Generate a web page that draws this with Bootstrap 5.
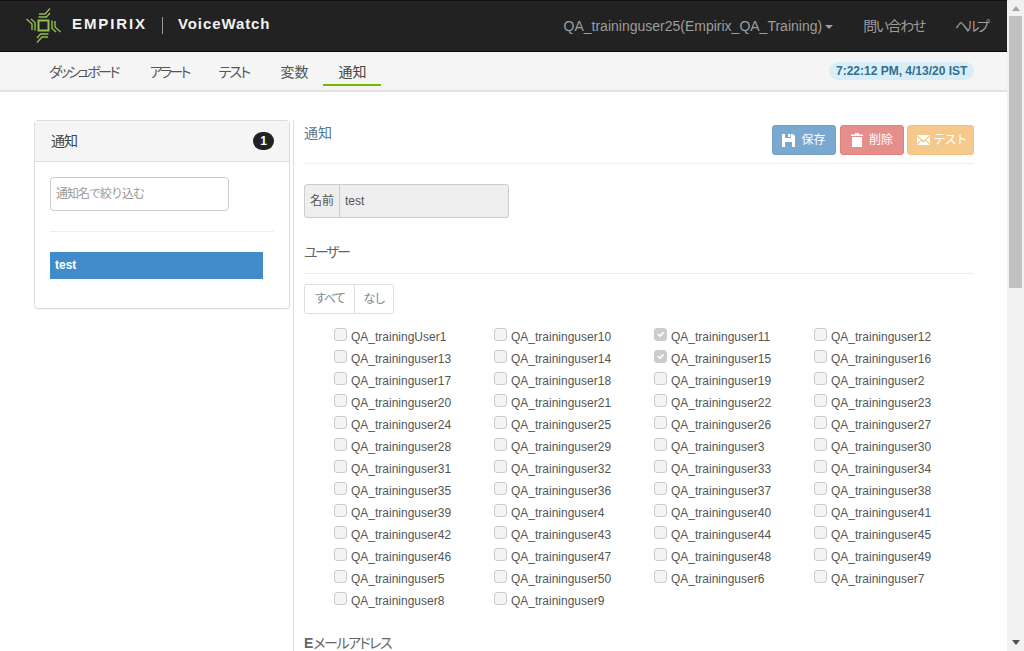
<!DOCTYPE html>
<html lang="ja">
<head>
<meta charset="utf-8">
<title>VoiceWatch</title>
<link rel="stylesheet" href="https://cdn.jsdelivr.net/npm/bootstrap@5.3.0/dist/css/bootstrap.min.css">
<style>
html,body{height:100%;overflow:hidden}
body{font-family:"Liberation Sans","Noto Sans CJK JP",sans-serif;font-size:12px;color:#555;font-feature-settings:"palt"}
.shell{height:651px}
.page{width:1007px;flex:none;overflow:hidden}
.sbar{width:17px;background:#f1f1f1;flex:none;padding:0 2px}
.sbar-thumb{height:272px;background:#c1c1c1}
.sbar-up,.sbar-down{height:16px}
.sbar-up svg,.sbar-down svg{display:block;margin:0 auto}
.topbar{height:52px;background:#222;border-top:1px solid #111;border-bottom:1px solid #080808;padding:0 5px 0 26px}
.logo-text{font-weight:700;color:#f2f2f2;font-size:15px;padding-bottom:3px}
.logo-a{letter-spacing:1.9px;margin-left:10px}
.logo-b{letter-spacing:.9px}
.logo-sep{width:1px;height:17px;background:#999;margin:0 15px 2px 15px}
.top-link{color:#9d9d9d;font-size:14px;text-decoration:none;padding:0 15px}
.top-caret{display:inline-block;border-top:4px solid #9d9d9d;border-left:4px solid transparent;border-right:4px solid transparent;margin-left:3px;vertical-align:middle}
.ls-a{letter-spacing:-1.4px}
.ls-h{letter-spacing:-2.7px}
.ls-b{letter-spacing:-2.5px}
.ls-c{letter-spacing:-2.6px}
.ls-d{letter-spacing:-2.75px}
.ls-t{letter-spacing:-1.7px}
.ls-f{letter-spacing:-1.5px}
.ls-g{letter-spacing:-1px}
.subbar{height:40px;background:#f5f5f5;border-bottom:2px solid #e3e3e3;padding:0 33px 0 34px}
.sub-link{color:#555;font-size:14px;text-decoration:none;padding:0 15px;height:34px;line-height:40px;display:block;margin-top:0;position:relative}
.sub-link.on{border-bottom:2px solid #7ab800;color:#444;padding:0 14px 0 16px}
.sub-first{padding-right:17px}
.sub-third{padding-right:16px}
.sub-fourth{padding-right:14px}
.clock{background:#d9edf7;color:#31708f;font-weight:700;font-size:12px;border-radius:9px;height:18px;line-height:18px;padding:0 7px;width:145px;text-align:center;white-space:nowrap;margin-top:-1px}
.body-row{padding:28px 33px 0 34px}
.side{width:256px;flex:none}
.side-card{--bs-card-border-color:#ddd;--bs-card-border-radius:4px;height:189px;box-shadow:0 1px 1px rgba(0,0,0,.05)}
.side-head{height:41px;background:#f5f5f5;border-bottom:1px solid #ddd;padding:0 15px 0 16px;font-size:14px;color:#444}
.cnt{background:#222;color:#fff;font-weight:700;font-size:12px;width:21px;height:18px;border-radius:9px;line-height:18px;text-align:center}
.side-body{padding:15px}
.filter{width:179px;height:34px;font-size:12px;padding:6px 5px;border-color:#ccc;border-radius:4px;letter-spacing:-1px}
.filter::placeholder{color:#999}
.rule{border:0;border-top:1px solid #eee;opacity:1;margin:20px 0 0}
.side-item{width:213px;height:27px;line-height:27px;background:#428bca;color:#fff;font-weight:700;padding-left:5px;margin-top:20px}
.main-col{margin-left:3px;border-left:1px solid #ddd;padding-left:10px;flex:1;height:560px;margin-top:0}
.h-notice{font-size:14px;color:#5a7690;height:43px;padding-top:4px;line-height:18px}
.h-sec{font-size:14px;color:#666;line-height:18px}
.head-row{height:44px;border-bottom:1px solid #eee}
.btn-row{padding-top:5px}
.act{--bs-btn-padding-x:0;--bs-btn-padding-y:0;height:30px;font-size:12px;border-radius:3px;color:#fff;display:inline-flex;align-items:center;justify-content:center;gap:6px;--bs-btn-disabled-color:#fff;--bs-btn-disabled-opacity:.65}
.act-save{width:64px;--bs-btn-disabled-bg:#337ab7;--bs-btn-disabled-border-color:#2e6da4}
.act-del{width:64px;--bs-btn-disabled-bg:#d9534f;--bs-btn-disabled-border-color:#d43f3a}
.act-test{width:67px;gap:3px;margin-left:-1px;letter-spacing:-1px;padding-left:3px;--bs-btn-disabled-bg:#f0ad4e;--bs-btn-disabled-border-color:#eea236}
.name-group{width:205px;height:34px;margin-top:20px}
.name-group .input-group-text{background:#eee;border-color:#ccc;font-size:12px;color:#555;padding:0 5px;width:36px;justify-content:center;border-radius:3px 0 0 3px}
.name-group .form-control{background:#eee;border-color:#ccc;font-size:12px;color:#555;padding:0 5px;border-radius:0 3px 3px 0}
.sec-users{margin-top:25px;height:31px;border-bottom:1px solid #eee}
.pick{margin-top:10px}
.pick .btn{--bs-btn-padding-x:0;--bs-btn-padding-y:0;height:30px;font-size:12px;color:#888;border-color:#ddd;border-radius:3px;--bs-btn-bg:#fff;letter-spacing:-1.5px}
.pick .w-all{width:51px}
.pick .w-none{width:40px}
.users{margin:12px 0 0 30px;width:640px}
.u-cell{height:22px;display:flex;align-items:flex-start;gap:4px;color:#555;white-space:nowrap;line-height:22px}
.u-cell .form-check-input{width:13px;height:13px;margin:2px 0 0;border-color:#ccc;background-color:#f3f3f3;border-radius:3px;opacity:1;flex:none}
.u-cell .form-check-input:checked{background-color:#ccc;border-color:#ccc}
.u-cell .form-check-input:disabled~.form-check-label{opacity:1;color:#555}
.h-mail{font-size:14px;color:#666;margin-top:22px;line-height:18px}
.h-mail b{font-weight:700}
</style>
</head>
<body>
<div class="shell d-flex">
<div class="page">
  <header class="topbar d-flex align-items-center">
    <svg width="36" height="36" viewBox="0 0 36 36" aria-hidden="true">
      <g fill="none" stroke="#8fbe4f" stroke-width="1.4">
        <rect x="12.500" y="12.500" width="10" height="10" stroke-width="2"/>
        <g><path d="M12.500 9H20.500L24 5"/><path d="M13 6H19L24 .5"/></g>
        <g transform="rotate(90 17.5 17.5)"><path d="M12.500 9H20.500L24 5"/><path d="M13 6H19L24 .5"/></g>
        <g transform="rotate(180 17.5 17.5)"><path d="M12.500 9H20.500L24 5"/><path d="M13 6H19L24 .5"/></g>
        <g transform="rotate(270 17.5 17.5)"><path d="M12.500 9H20.500L24 5"/><path d="M13 6H19L24 .5"/></g>
      </g>
    </svg>
    <span class="logo-text logo-a">EMPIRIX</span><span class="logo-sep"></span><span class="logo-text logo-b">VoiceWatch</span>
    <nav class="ms-auto d-flex align-items-center">
      <a class="top-link" href="#">QA_traininguser25(Empirix_QA_Training)<span class="top-caret"></span></a>
      <a class="top-link" href="#"><span class="ls-a">問い合わせ</span></a>
      <a class="top-link" href="#"><span class="ls-h">ヘルプ</span></a>
    </nav>
  </header>
  <div class="subbar d-flex justify-content-between">
    <nav class="d-flex">
      <a class="sub-link sub-first" href="#"><span class="ls-c">ダッシュボード</span></a>
      <a class="sub-link" href="#"><span class="ls-d">アラート</span></a>
      <a class="sub-link sub-third" href="#"><span class="ls-t">テスト</span></a>
      <a class="sub-link sub-fourth" href="#">変数</a>
      <a class="sub-link on" href="#">通知</a>
    </nav>
    <div class="d-flex align-items-center"><span class="clock">7:22:12 PM, 4/13/20 IST</span></div>
  </div>
  <div class="body-row d-flex">
    <aside class="side">
      <div class="card side-card">
        <div class="side-head d-flex justify-content-between align-items-center"><span class="ls-g">通知</span><span class="cnt">1</span></div>
        <div class="side-body">
          <input class="form-control filter" type="text" placeholder="通知名で絞り込む">
          <hr class="rule">
          <div class="side-item">test</div>
        </div>
      </div>
    </aside>
    <main class="main-col">
      <div class="head-row d-flex justify-content-between align-items-start">
        <div class="h-notice">通知</div>
        <div class="d-flex gap-1 btn-row">
          <button class="btn act act-save" disabled><svg width="13" height="13" viewBox="0 0 13 13" aria-hidden="true"><path fill="#fff" fill-rule="evenodd" d="M0 0H3V4H9V0H11L13 2V13H0ZM6 0H8.500V3H6ZM3 8V13H10V8Z"/></svg>保存</button>
          <button class="btn act act-del" disabled><svg width="12" height="14" viewBox="0 0 12 14" aria-hidden="true"><path fill="#fff" d="M4 0H8V1.500H12V3H0V1.500H4ZM1 4H11V14H1Z"/></svg>削除</button>
          <button class="btn act act-test" disabled><svg width="13" height="10" viewBox="0 0 13 10" aria-hidden="true"><path fill="#fff" d="M0 0H13L6.500 5.500ZM0 1.500L4 5L0 8.500ZM13 1.500V8.500L9 5ZM0 10L4.700 6L6.500 7.500L8.300 6L13 10Z"/></svg>テスト</button>
        </div>
      </div>
      <div class="input-group name-group">
        <span class="input-group-text">名前</span>
        <input class="form-control" type="text" value="test" readonly>
      </div>
      <div class="h-sec sec-users"><span class="ls-b">ユーザー</span></div>
      <div class="btn-group pick" role="group">
        <button type="button" class="btn btn-outline-secondary w-all">すべて</button>
        <button type="button" class="btn btn-outline-secondary w-none">なし</button>
      </div>
      <div class="row row-cols-4 g-0 users">
        <div class="col u-cell"><input class="form-check-input" type="checkbox" disabled id="u1"><label class="form-check-label" for="u1">QA_trainingUser1</label></div>
        <div class="col u-cell"><input class="form-check-input" type="checkbox" disabled id="u10"><label class="form-check-label" for="u10">QA_traininguser10</label></div>
        <div class="col u-cell"><input class="form-check-input" type="checkbox" disabled checked id="u11"><label class="form-check-label" for="u11">QA_traininguser11</label></div>
        <div class="col u-cell"><input class="form-check-input" type="checkbox" disabled id="u12"><label class="form-check-label" for="u12">QA_traininguser12</label></div>
        <div class="col u-cell"><input class="form-check-input" type="checkbox" disabled id="u13"><label class="form-check-label" for="u13">QA_traininguser13</label></div>
        <div class="col u-cell"><input class="form-check-input" type="checkbox" disabled id="u14"><label class="form-check-label" for="u14">QA_traininguser14</label></div>
        <div class="col u-cell"><input class="form-check-input" type="checkbox" disabled checked id="u15"><label class="form-check-label" for="u15">QA_traininguser15</label></div>
        <div class="col u-cell"><input class="form-check-input" type="checkbox" disabled id="u16"><label class="form-check-label" for="u16">QA_traininguser16</label></div>
        <div class="col u-cell"><input class="form-check-input" type="checkbox" disabled id="u17"><label class="form-check-label" for="u17">QA_traininguser17</label></div>
        <div class="col u-cell"><input class="form-check-input" type="checkbox" disabled id="u18"><label class="form-check-label" for="u18">QA_traininguser18</label></div>
        <div class="col u-cell"><input class="form-check-input" type="checkbox" disabled id="u19"><label class="form-check-label" for="u19">QA_traininguser19</label></div>
        <div class="col u-cell"><input class="form-check-input" type="checkbox" disabled id="u2"><label class="form-check-label" for="u2">QA_traininguser2</label></div>
        <div class="col u-cell"><input class="form-check-input" type="checkbox" disabled id="u20"><label class="form-check-label" for="u20">QA_traininguser20</label></div>
        <div class="col u-cell"><input class="form-check-input" type="checkbox" disabled id="u21"><label class="form-check-label" for="u21">QA_traininguser21</label></div>
        <div class="col u-cell"><input class="form-check-input" type="checkbox" disabled id="u22"><label class="form-check-label" for="u22">QA_traininguser22</label></div>
        <div class="col u-cell"><input class="form-check-input" type="checkbox" disabled id="u23"><label class="form-check-label" for="u23">QA_traininguser23</label></div>
        <div class="col u-cell"><input class="form-check-input" type="checkbox" disabled id="u24"><label class="form-check-label" for="u24">QA_traininguser24</label></div>
        <div class="col u-cell"><input class="form-check-input" type="checkbox" disabled id="u25"><label class="form-check-label" for="u25">QA_traininguser25</label></div>
        <div class="col u-cell"><input class="form-check-input" type="checkbox" disabled id="u26"><label class="form-check-label" for="u26">QA_traininguser26</label></div>
        <div class="col u-cell"><input class="form-check-input" type="checkbox" disabled id="u27"><label class="form-check-label" for="u27">QA_traininguser27</label></div>
        <div class="col u-cell"><input class="form-check-input" type="checkbox" disabled id="u28"><label class="form-check-label" for="u28">QA_traininguser28</label></div>
        <div class="col u-cell"><input class="form-check-input" type="checkbox" disabled id="u29"><label class="form-check-label" for="u29">QA_traininguser29</label></div>
        <div class="col u-cell"><input class="form-check-input" type="checkbox" disabled id="u3"><label class="form-check-label" for="u3">QA_traininguser3</label></div>
        <div class="col u-cell"><input class="form-check-input" type="checkbox" disabled id="u30"><label class="form-check-label" for="u30">QA_traininguser30</label></div>
        <div class="col u-cell"><input class="form-check-input" type="checkbox" disabled id="u31"><label class="form-check-label" for="u31">QA_traininguser31</label></div>
        <div class="col u-cell"><input class="form-check-input" type="checkbox" disabled id="u32"><label class="form-check-label" for="u32">QA_traininguser32</label></div>
        <div class="col u-cell"><input class="form-check-input" type="checkbox" disabled id="u33"><label class="form-check-label" for="u33">QA_traininguser33</label></div>
        <div class="col u-cell"><input class="form-check-input" type="checkbox" disabled id="u34"><label class="form-check-label" for="u34">QA_traininguser34</label></div>
        <div class="col u-cell"><input class="form-check-input" type="checkbox" disabled id="u35"><label class="form-check-label" for="u35">QA_traininguser35</label></div>
        <div class="col u-cell"><input class="form-check-input" type="checkbox" disabled id="u36"><label class="form-check-label" for="u36">QA_traininguser36</label></div>
        <div class="col u-cell"><input class="form-check-input" type="checkbox" disabled id="u37"><label class="form-check-label" for="u37">QA_traininguser37</label></div>
        <div class="col u-cell"><input class="form-check-input" type="checkbox" disabled id="u38"><label class="form-check-label" for="u38">QA_traininguser38</label></div>
        <div class="col u-cell"><input class="form-check-input" type="checkbox" disabled id="u39"><label class="form-check-label" for="u39">QA_traininguser39</label></div>
        <div class="col u-cell"><input class="form-check-input" type="checkbox" disabled id="u4"><label class="form-check-label" for="u4">QA_traininguser4</label></div>
        <div class="col u-cell"><input class="form-check-input" type="checkbox" disabled id="u40"><label class="form-check-label" for="u40">QA_traininguser40</label></div>
        <div class="col u-cell"><input class="form-check-input" type="checkbox" disabled id="u41"><label class="form-check-label" for="u41">QA_traininguser41</label></div>
        <div class="col u-cell"><input class="form-check-input" type="checkbox" disabled id="u42"><label class="form-check-label" for="u42">QA_traininguser42</label></div>
        <div class="col u-cell"><input class="form-check-input" type="checkbox" disabled id="u43"><label class="form-check-label" for="u43">QA_traininguser43</label></div>
        <div class="col u-cell"><input class="form-check-input" type="checkbox" disabled id="u44"><label class="form-check-label" for="u44">QA_traininguser44</label></div>
        <div class="col u-cell"><input class="form-check-input" type="checkbox" disabled id="u45"><label class="form-check-label" for="u45">QA_traininguser45</label></div>
        <div class="col u-cell"><input class="form-check-input" type="checkbox" disabled id="u46"><label class="form-check-label" for="u46">QA_traininguser46</label></div>
        <div class="col u-cell"><input class="form-check-input" type="checkbox" disabled id="u47"><label class="form-check-label" for="u47">QA_traininguser47</label></div>
        <div class="col u-cell"><input class="form-check-input" type="checkbox" disabled id="u48"><label class="form-check-label" for="u48">QA_traininguser48</label></div>
        <div class="col u-cell"><input class="form-check-input" type="checkbox" disabled id="u49"><label class="form-check-label" for="u49">QA_traininguser49</label></div>
        <div class="col u-cell"><input class="form-check-input" type="checkbox" disabled id="u5"><label class="form-check-label" for="u5">QA_traininguser5</label></div>
        <div class="col u-cell"><input class="form-check-input" type="checkbox" disabled id="u50"><label class="form-check-label" for="u50">QA_traininguser50</label></div>
        <div class="col u-cell"><input class="form-check-input" type="checkbox" disabled id="u6"><label class="form-check-label" for="u6">QA_traininguser6</label></div>
        <div class="col u-cell"><input class="form-check-input" type="checkbox" disabled id="u7"><label class="form-check-label" for="u7">QA_traininguser7</label></div>
        <div class="col u-cell"><input class="form-check-input" type="checkbox" disabled id="u8"><label class="form-check-label" for="u8">QA_traininguser8</label></div>
        <div class="col u-cell"><input class="form-check-input" type="checkbox" disabled id="u9"><label class="form-check-label" for="u9">QA_traininguser9</label></div>
      </div>
      <div class="h-mail"><b>E</b><span class="ls-f">メールアドレス</span></div>
    </main>
  </div>
</div>
<div class="sbar d-flex flex-column">
  <div class="sbar-up"><svg width="10" height="16" viewBox="0 0 10 16" aria-hidden="true"><path fill="#a3a3a3" d="M1 11L5 6L9 11Z"/></svg></div>
  <div class="sbar-thumb"></div>
  <div class="sbar-down mt-auto"><svg width="10" height="16" viewBox="0 0 10 16" aria-hidden="true"><path fill="#505050" d="M1 5L5 10L9 5Z"/></svg></div>
</div>
</div>
<script src="https://cdn.jsdelivr.net/npm/bootstrap@5.3.0/dist/js/bootstrap.bundle.min.js"></script>
</body>
</html>
